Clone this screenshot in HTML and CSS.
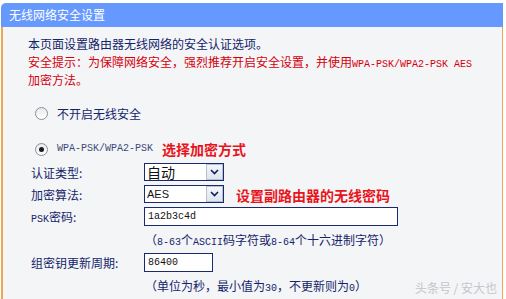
FILE: index.html
```html
<!DOCTYPE html>
<html lang="zh-CN">

<head>
    <meta charset="UTF-8" />
    <meta name="viewport" content="width=device-width, initial-scale=1.0" />
    <title>无线网络安全设置</title>
    <link rel="stylesheet" href="styles.css">
</head>

<body>
    <div class="panel">
        <div class="panel-title">无线网络安全设置</div>
        <div class="panel-body">
            <p class="intro">本页面设置路由器无线网络的安全认证选项。</p>
            <p class="warn">安全提示：为保障网络安全，强烈推荐开启安全设置，并使用<span class="en">WPA-PSK/WPA2-PSK AES</span><br>加密方法。</p>

            <div class="radio-row first">
                <span class="radio"></span>
                <span>不开启无线安全</span>
            </div>
            <div class="radio-row second">
                <span class="radio checked"></span>
                <span class="en muted">WPA-PSK/WPA2-PSK</span>
                <span class="note">选择加密方式</span>
            </div>

            <div class="form">
                <div class="row">
                    <span class="label">认证类型:</span>
                    <div class="select">
                        <span class="select-value big">自动</span>
                        <span class="select-btn">
                            <svg width="9" height="6" viewBox="0 0 9 6"><path d="M1 1 L4.5 4.5 L8 1" fill="none" stroke="#10205a" stroke-width="1.6" /></svg>
                        </span>
                    </div>
                </div>
                <div class="row">
                    <span class="label">加密算法:</span>
                    <div class="select">
                        <span class="select-value small">AES</span>
                        <span class="select-btn">
                            <svg width="9" height="6" viewBox="0 0 9 6"><path d="M1 1 L4.5 4.5 L8 1" fill="none" stroke="#10205a" stroke-width="1.6" /></svg>
                        </span>
                    </div>
                    <span class="note note-gap">设置副路由器的无线密码</span>
                </div>
                <div class="row">
                    <span class="label"><span class="en">PSK</span>密码:</span>
                    <input class="field wide" type="text" value="1a2b3c4d">
                </div>
                <div class="row hint">
                    <span class="hint-text">（<span class="en">8-63</span>个<span class="en">ASCII</span>码字符或<span class="en">8-64</span>个十六进制字符）</span>
                </div>
                <div class="row">
                    <span class="label">组密钥更新周期:</span>
                    <input class="field short" type="text" value="86400">
                </div>
                <div class="row hint">
                    <span class="hint-text">（单位为秒，最小值为<span class="en">30</span>，不更新则为<span class="en">0</span>）</span>
                </div>
            </div>
        </div>
        <div class="watermark">头条号 / 安大也</div>
    </div>
</body>

</html>
```

FILE: styles.css
```css
* {
    margin: 0;
    padding: 0;
    box-sizing: border-box;
}

body {
    background-color: #fff;
    padding-top: 3px;
    font-family: "Noto Sans CJK SC", "Noto Sans", sans-serif;
    font-size: 12px;
    color: #14246a;
}

.panel {
    position: relative;
    width: 502px;
    height: 296px;
    margin-left: 1px;
    background-color: #f4f5f7;
}

.panel-title {
    height: 24px;
    line-height: 23px;
    padding-left: 8px;
    background-color: #6699fd;
    color: #fff;
    font-size: 12px;
    border-radius: 5px 0 0 0;
}

.panel-body {
    height: 272px;
    padding: 8px 0 0 25px;
    border-left: 2px solid #efa552;
    border-right: 1px solid #efa552;
}

.intro,
.warn {
    line-height: 18px;
}

.warn {
    color: #d4000c;
}

.en {
    font-family: "Liberation Mono", monospace;
    font-size: 10px;
    line-height: 1;
}

.muted {
    color: #3c4a7a;
}

.radio-row {
    display: flex;
    align-items: center;
    height: 18px;
    padding-left: 7px;
}

.radio-row.first {
    margin-top: 15px;
}

.radio-row.second {
    margin-top: 18px;
}

.radio {
    position: relative;
    width: 13px;
    height: 13px;
    margin-right: 9px;
    border: 1px solid #8a8f99;
    border-radius: 50%;
    background: linear-gradient(#e8e9ec, #fff);
}

.radio.checked::after {
    content: "";
    position: absolute;
    left: 3px;
    top: 3px;
    width: 5px;
    height: 5px;
    border-radius: 50%;
    background-color: #1a1a1a;
}

.note {
    margin-left: 9px;
    color: #e8141c;
    font-size: 14px;
    font-weight: bold;
}

.note-gap {
    margin-left: 12px;
    padding-top: 2px;
}

.form {
    margin-top: 3px;
    padding-left: 3px;
}

.row {
    display: flex;
    align-items: center;
    height: 22px;
}

.row.hint {
    height: 24px;
}

.label {
    width: 113px;
}

.hint-text {
    padding-left: 114px;
}

.select {
    display: flex;
    width: 80px;
    height: 18px;
    border: 1px solid #1a2a6c;
    background-color: #fff;
}

.select-value {
    flex: 1;
    padding-left: 2px;
    color: #111;
    line-height: 16px;
}

.select-value.big {
    font-size: 14px;
}

.select-value.small {
    font-family: "Liberation Sans", sans-serif;
    font-size: 11px;
}

.select-btn {
    display: flex;
    align-items: center;
    justify-content: center;
    width: 17px;
    border: 1px solid #b7bfd2;
    background: linear-gradient(#f4f6fa, #dfe4ee);
}

.field {
    height: 19px;
    padding: 0 3px;
    border: 1px solid #1a2a6c;
    background-color: #fff;
    color: #111;
    font-family: "Liberation Mono", monospace;
    font-size: 10px;
    outline: none;
}

.field.wide {
    width: 254px;
}

.field.short {
    width: 69px;
}

.watermark {
    position: absolute;
    right: 6px;
    bottom: 3px;
    color: #c3c6cc;
    font-size: 12px;
}
```
